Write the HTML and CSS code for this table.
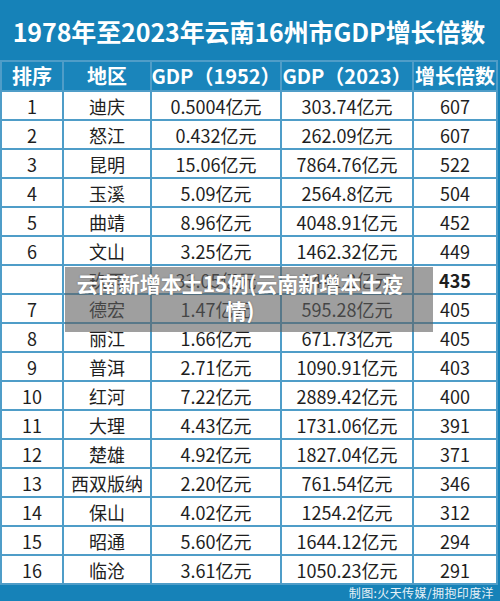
FILE: index.html
```html
<!DOCTYPE html>
<html lang="zh-CN">
<head>
<meta charset="utf-8">
<link rel="stylesheet" href="styles.css">
</head>
<body>
<div class="page">
  <h1 class="title">1978年至2023年云南16州市GDP增长倍数</h1>
  <div class="grid">
    <div class="th">排序</div><div class="th">地区</div><div class="th">GDP（1952）</div><div class="th">GDP（2023）</div><div class="th">增长倍数</div>
    <div class="td">1</div><div class="td">迪庆</div><div class="td">0.5004亿元</div><div class="td">303.74亿元</div><div class="td">607</div>
    <div class="td">2</div><div class="td">怒江</div><div class="td">0.432亿元</div><div class="td">262.09亿元</div><div class="td">607</div>
    <div class="td">3</div><div class="td">昆明</div><div class="td">15.06亿元</div><div class="td">7864.76亿元</div><div class="td">522</div>
    <div class="td">4</div><div class="td">玉溪</div><div class="td">5.09亿元</div><div class="td">2564.8亿元</div><div class="td">504</div>
    <div class="td">5</div><div class="td">曲靖</div><div class="td">8.96亿元</div><div class="td">4048.91亿元</div><div class="td">452</div>
    <div class="td">6</div><div class="td">文山</div><div class="td">3.25亿元</div><div class="td">1462.32亿元</div><div class="td">449</div>
    <div class="td"></div><div class="td">玖雨</div><div class="td">33.05亿元</div><div class="td">1441.2亿元</div><div class="td bold">435</div>
    <div class="td">7</div><div class="td">德宏</div><div class="td">1.47亿元</div><div class="td">595.28亿元</div><div class="td">405</div>
    <div class="td">8</div><div class="td">丽江</div><div class="td">1.66亿元</div><div class="td">671.73亿元</div><div class="td">405</div>
    <div class="td">9</div><div class="td">普洱</div><div class="td">2.71亿元</div><div class="td">1090.91亿元</div><div class="td">403</div>
    <div class="td">10</div><div class="td">红河</div><div class="td">7.22亿元</div><div class="td">2889.42亿元</div><div class="td">400</div>
    <div class="td">11</div><div class="td">大理</div><div class="td">4.43亿元</div><div class="td">1731.06亿元</div><div class="td">391</div>
    <div class="td">12</div><div class="td">楚雄</div><div class="td">4.92亿元</div><div class="td">1827.04亿元</div><div class="td">371</div>
    <div class="td">13</div><div class="td">西双版纳</div><div class="td">2.20亿元</div><div class="td">761.54亿元</div><div class="td">346</div>
    <div class="td">14</div><div class="td">保山</div><div class="td">4.02亿元</div><div class="td">1254.2亿元</div><div class="td">312</div>
    <div class="td">15</div><div class="td">昭通</div><div class="td">5.60亿元</div><div class="td">1644.12亿元</div><div class="td">294</div>
    <div class="td">16</div><div class="td">临沧</div><div class="td">3.61亿元</div><div class="td">1050.23亿元</div><div class="td">291</div>
  </div>
  <div class="footer">制图:火天传媒/拥抱印度洋</div>
  <div class="overlay">云南新增本土15例(云南新增本土疫情)</div>
</div>
</body>
</html>
```

FILE: styles.css
```css
* { box-sizing: border-box; }
html, body { margin: 0; padding: 0; }
body {
  width: 500px;
  height: 601px;
  overflow: hidden;
  background: #1682b8;
  font-family: "Noto Sans CJK SC", "Noto Sans", sans-serif;
}
.page {
  position: relative;
  width: 500px;
  height: 601px;
}
.title {
  margin: 0;
  height: 60px;
  display: flex;
  align-items: center;
  justify-content: center;
  color: #fff;
  font-size: 25px;
  font-weight: 700;
  letter-spacing: -0.1px;
  padding-top: 2px;
  padding-right: 2px;
}
.grid {
  margin-right: 2px;
  display: grid;
  grid-template-columns: 60px 86px 128px 130px 82px;
  grid-template-rows: 28px repeat(17, 27px);
  gap: 2px;
  padding: 2px;
  background: #4f9dc8;
}
.th {
  background: #1a85bb;
  color: #fff;
  font-size: 20px;
  font-weight: 700;
  display: flex;
  align-items: center;
  justify-content: center;
  white-space: nowrap;
  line-height: 1;
}
.td {
  background: #fff;
  color: #1e1e1e;
  font-size: 18px;
  display: flex;
  align-items: center;
  justify-content: center;
  white-space: nowrap;
  line-height: 1;
}
.td.bold { font-weight: 700; }
.footer {
  height: 16px;
  padding-right: 6px;
  color: #e6f1f7;
  font-size: 12px;
  line-height: 16px;
  text-align: right;
  letter-spacing: 0.4px;
}
.overlay {
  position: absolute;
  left: 65px;
  top: 267px;
  width: 368px;
  height: 65px;
  padding: 3px 20px 0 2px;
  background: rgba(95, 95, 95, 0.6);
  color: #fff;
  font-size: 21px;
  font-weight: 700;
  line-height: 27px;
  text-align: center;
  text-shadow: 0 0 2px rgba(0,0,0,0.3);
}
```
